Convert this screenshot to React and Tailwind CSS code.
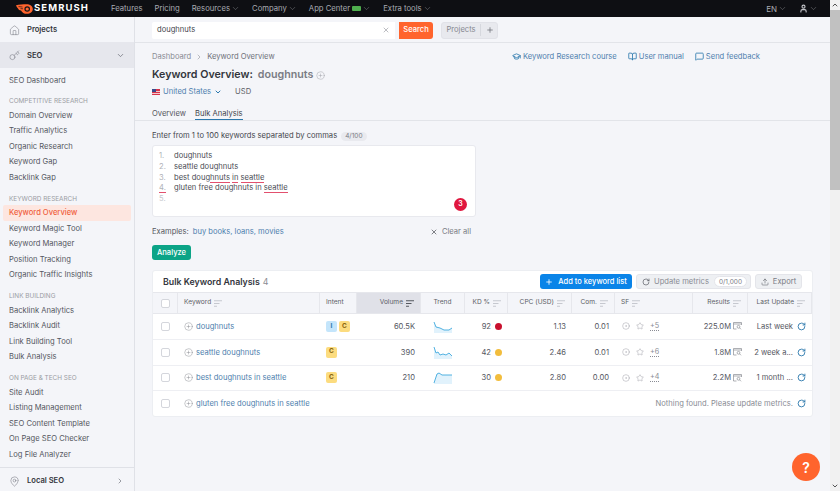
import React from 'react';
import {
  BookOpen, ChevronDown, ChevronRight, ChevronUp, CirclePlus, House, Key, MapPin, MessageSquare,
  GraduationCap, Plus, RotateCw, Star, Upload, User, X, CircleDot,
} from 'lucide-react';

const topNav = [
  { label: 'Features' },
  { label: 'Pricing' },
  { label: 'Resources', caret: true },
  { label: 'Company', caret: true },
  { label: 'App Center', badge: true, caret: true },
  { label: 'Extra tools', caret: true },
];

const sideGroups = [
  { items: ['SEO Dashboard'] },
  { title: 'COMPETITIVE RESEARCH', items: ['Domain Overview', 'Traffic Analytics', 'Organic Research', 'Keyword Gap', 'Backlink Gap'] },
  { title: 'KEYWORD RESEARCH', items: ['Keyword Overview', 'Keyword Magic Tool', 'Keyword Manager', 'Position Tracking', 'Organic Traffic Insights'] },
  { title: 'LINK BUILDING', items: ['Backlink Analytics', 'Backlink Audit', 'Link Building Tool', 'Bulk Analysis'] },
  { title: 'ON PAGE & TECH SEO', items: ['Site Audit', 'Listing Management', 'SEO Content Template', 'On Page SEO Checker', 'Log File Analyzer'] },
];

const gridCols = 'grid grid-cols-[25px_142px_37px_64px_44px_43px_64px_43px_78px_55px_64px]';

const rows = [
  { kw: 'doughnuts', intent: ['I', 'C'], volume: '60.5K', trend: 'M1 3 L3 8 L7 9 L11 11 L16 11 L19 9 L19 14 L1 14 Z', kd: '92', dot: 'bg-[#c8102e]', cpc: '1.13', com: '0.01', sf: '+5', results: '225.0M', update: 'Last week' },
  { kw: 'seattle doughnuts', intent: ['C'], volume: '390', trend: 'M1 2 L3 8 L5 7 L7 10 L10 9 L13 10 L16 8 L19 11 L19 14 L1 14 Z', kd: '42', dot: 'bg-[#f2bd3d]', cpc: '2.46', com: '0.01', sf: '+6', results: '1.8M', update: '2 week a...' },
  { kw: 'best doughnuts in seattle', intent: ['C'], volume: '210', trend: 'M1 13 L4 4 L6 3 L9 5 L13 5 L19 5 L19 14 L1 14 Z', kd: '30', dot: 'bg-[#f2bd3d]', cpc: '2.80', com: '0.00', sf: '+4', results: '2.2M', update: '1 month ...' },
];

function SortIcon({ dark }) {
  const color = dark ? '#55585f' : '#c6c8cf';
  return (
    <svg width="8" height="7" viewBox="0 0 8 7" className="shrink-0">
      <path d="M0 .75h8M0 3.5h5.5M0 6.25h3" stroke={color} strokeWidth="1" fill="none" />
    </svg>
  );
}

function SerpIcon() {
  return (
    <svg width="9" height="8" viewBox="0 0 9 8" className="shrink-0" fill="none" stroke="#8a8c94" strokeWidth="0.7">
      <path d="M3.5 7H.5V.5h8V3M.5 2h8" />
      <circle cx="5.5" cy="4.8" r="1.4" />
      <path d="M6.5 5.8L8 7.3" />
    </svg>
  );
}

function Logo() {
  return (
    <svg width="17" height="10" viewBox="0 0 17 10" className="shrink-0">
      <path d="M0 1.2 C3 .6 7 .2 10.5 .2 C14 .2 16.8 2.2 16.8 5 C16.8 7.8 14.2 9.8 11 9.8 C8 9.8 6 8.4 5 6.4 C3.6 6.4 2.4 5.6 2 4.4 C1 3.4 .4 2.4 0 1.2 Z" fill="#ff642d" />
      <path d="M2.5 2.6 L6.5 3 M4.5 4.6 L7 4.8" stroke="#15161a" strokeWidth="0.7" fill="none" />
      <circle cx="11.2" cy="5" r="2.8" fill="#15161a" />
      <circle cx="11.2" cy="5" r="1.6" fill="#ff642d" />
    </svg>
  );
}

function TopBar() {
  return (
    <div className="h-[17px] bg-[#0e0f13] flex items-center shrink-0 text-[8px] text-[#a9abb2]">
      <div className="w-[111px] pl-[16px] flex items-center gap-[1px] shrink-0">
        <Logo />
        <span className="text-[9.5px] font-bold text-white tracking-[1.1px]">SEMRUSH</span>
      </div>
      <div className="flex items-center gap-[12px]">
        {topNav.map((n) => (
          <div key={n.label} className="flex items-center gap-[1px]">
            <span className="text-[7.7px]">{n.label}</span>
            {n.badge && <span className="w-[9px] h-[5px] rounded-[1px] bg-[#4fae4e] ml-[1px]" />}
            {n.caret && <ChevronDown size={9} strokeWidth={1} />}
          </div>
        ))}
      </div>
      <div className="ml-auto flex items-center gap-[12px] pr-[12px]">
        <div className="flex items-center gap-[1px]">
          <span>EN</span>
          <ChevronDown size={9} strokeWidth={1} />
        </div>
        <div className="flex items-center gap-[1px]">
          <User size={9} strokeWidth={3} className="text-[#c4c5ca]" />
          <ChevronDown size={9} strokeWidth={1} />
        </div>
      </div>
    </div>
  );
}

function Sidebar() {
  return (
    <div className="w-[135px] shrink-0 border-r border-[#dfe1e7] bg-[#f4f5f9] flex flex-col text-[7.6px] text-[#55575f]">
      <div className="h-[25px] pt-[1px] flex items-center pl-[9px] gap-[7px] font-semibold text-[#33353c] shrink-0">
        <House size={11} strokeWidth={1.1} className="text-[#6d7079]" />
        <span>Projects</span>
      </div>
      <div className="h-[26px] pt-[1px] bg-[#e6e7ed] flex items-center pl-[9px] pr-[9px] gap-[7px] font-semibold text-[#33353c] shrink-0">
        <Key size={11} strokeWidth={1.1} className="text-[#6d7079]" />
        <span>SEO</span>
        <ChevronDown size={9} className="ml-auto text-[#6d7079]" />
      </div>
      <div className="pt-[5px] flex-1 flex flex-col">
        {sideGroups.map((g, i) => (
          <div key={i} className={i === 0 ? 'mb-[4px]' : 'mb-[5px]'}>
            {g.title && (
              <div className="h-[15px] pt-[4px] pl-[9px] flex items-center text-[6.4px] text-[#9a9ca3]">{g.title}</div>
            )}
            {g.items.map((item) => (
              item === 'Keyword Overview' ? (
                <div key={item} className="h-[15.5px] ml-[3px] mr-[3px] pl-[6px] flex items-center bg-[#fde6e0] rounded-[2px] text-[#f0613f] font-medium">
                  {item}
                </div>
              ) : (
                <div key={item} className="h-[15.5px] pl-[9px] flex items-center">{item}</div>
              )
            ))}
          </div>
        ))}
      </div>
      <div className="h-[26px] pt-[1px] border-t border-[#dfe1e7] flex items-center pl-[9px] pr-[10px] gap-[7px] font-semibold text-[#33353c] shrink-0">
        <MapPin size={11} strokeWidth={1.1} className="text-[#6d7079]" />
        <span>Local SEO</span>
        <ChevronRight size={8} className="ml-auto text-[#6d7079]" />
      </div>
    </div>
  );
}

function SearchRow() {
  return (
    <div className="h-[26px] pt-[1px] shrink-0 border-b border-[#e2e4e9] pl-[17px] flex items-center text-[7.6px]">
      <div className="w-[243px] h-[17px] bg-white rounded-l-[2px] flex items-center pl-[5px] pr-[5px] text-[#44464d]">
        <span>doughnuts</span>
        <X size={8} className="ml-auto text-[#9a9ca3]" />
      </div>
      <button className="ml-[4px] w-[34px] h-[17px] bg-[#ff642d] rounded-r-[3px] text-white font-medium">Search</button>
      <div className="ml-[8px] w-[57px] h-[17px] bg-[#e8e9ee] rounded-[3px] flex items-center text-[#868890] border border-[#e1e2e8]">
        <span className="w-[39px] text-center border-r border-[#d6d8de]">Projects</span>
        <Plus size={8} className="ml-[5px] text-[#77797f]" strokeWidth={2.5} />
      </div>
    </div>
  );
}

function PageHeader() {
  return (
    <div className="px-[17px] pt-[8px] shrink-0">
      <div className="h-[12px] flex items-center text-[7.6px] text-[#6f7179]">
        <span className="text-[#8a8c94]">Dashboard</span>
        <ChevronRight size={8} className="mx-[4px] text-[#9a9ca3]" />
        <span>Keyword Overview</span>
        <div className="ml-auto flex items-center text-[#4f7fae] mr-[53px]">
          <GraduationCap size={9} className="mr-[2px] text-[#2b78ad]" strokeWidth={2.2} />
          <span>Keyword Research course</span>
          <BookOpen size={9} className="ml-[11px] mr-[2px] text-[#2b78ad]" strokeWidth={2.2} />
          <span>User manual</span>
          <MessageSquare size={9} className="ml-[11px] mr-[2px] text-[#2b78ad]" strokeWidth={2.2} />
          <span>Send feedback</span>
        </div>
      </div>
      <div className="mt-[5px] h-[15px] flex items-center text-[10.7px] font-semibold text-[#33353c]">
        <span>Keyword Overview:</span>
        <span className="ml-[5px] text-[#7a7c84]">doughnuts</span>
        <CirclePlus size={9} strokeWidth={1.2} className="ml-[3px] text-[#9a9ca3]" />
      </div>
      <div className="mt-[2px] h-[13px] flex items-center text-[7.6px]">
        <svg width="8" height="6" viewBox="0 0 8 6" className="mr-[3px]">
          <rect width="8" height="6" fill="#d8344a" />
          <rect y="2" width="8" height="1" fill="#f3c6cc" />
          <rect y="4" width="8" height="1" fill="#f3c6cc" />
          <rect width="4" height="3" fill="#3a4a8c" />
        </svg>
        <span className="text-[#4f7fae]">United States</span>
        <ChevronDown size={8} strokeWidth={3} className="ml-[3px] text-[#2b78ad]" />
        <span className="ml-[13px] text-[#5c5e66]">USD</span>
      </div>
      <div className="mt-[10px] h-[12px] flex items-start text-[7.6px] text-[#55575f] gap-[9px]">
        <span>Overview</span>
        <span className="h-[12px] border-b border-[#2b78ad] text-[#44464d]">Bulk Analysis</span>
      </div>
    </div>
  );
}

function KeywordInput() {
  const under = 'border-b border-[#e2506e]';
  return (
    <div className="pl-[17px] w-[341px] shrink-0">
      <div className="mt-[10px] h-[10px] flex items-center text-[7.6px] text-[#44464d]">
        <span>Enter from 1 to 100 keywords separated by commas</span>
        <span className="ml-[4px] px-[4px] h-[9px] leading-[9px] rounded-full bg-[#e9eaef] text-[6.5px] text-[#7a7c84]">4/100</span>
      </div>
      <div className="relative mt-[4px] h-[72px] bg-white rounded-[3px] border border-[#e8e9ee] pl-[6px] pt-[5px] text-[7.6px] leading-[10.8px] text-[#4b4d55]">
        <div className="flex"><span className="w-[15px] text-[#b0b2b8]">1.</span><span>doughnuts</span></div>
        <div className="flex"><span className="w-[15px] text-[#b0b2b8]">2.</span><span>seattle doughnuts</span></div>
        <div className="flex"><span className="w-[15px] text-[#b0b2b8]">3.</span><span>best doug<span className={under}>hnuts</span> <span className={under}>in</span> <span className={under}>seattle</span></span></div>
        <div className="flex"><span className="w-[15px] text-[#b0b2b8]"><span className={under}>4.</span></span><span>gluten free doughnuts in <span className={under}>seattle</span></span></div>
        <div className="flex"><span className="w-[15px] text-[#c6c8cd]">5.</span></div>
        <span className="absolute right-[8px] bottom-[5px] w-[13px] h-[13px] rounded-full bg-[#e0173f] text-white text-[7px] font-semibold flex items-center justify-center">3</span>
      </div>
      <div className="mt-[9px] h-[12px] flex items-center text-[7.6px] text-[#55575f]">
        <span>Examples:</span>
        <span className="ml-[4px] text-[#4f7fae]">buy books, loans, movies</span>
        <X size={8} strokeWidth={2.5} className="ml-auto text-[#66686f]" />
        <span className="ml-[4px] mr-[5px] text-[#7a7c84]">Clear all</span>
      </div>
      <button className="block mt-[7px] w-[39px] h-[15px] bg-[#0ca487] rounded-[3px] text-white text-[7.6px] font-medium">Analyze</button>
    </div>
  );
}

function Th({ children, right, dark, center }) {
  return (
    <div className={`h-full flex items-center gap-[3px] px-[6px] border-r border-[#e6e7ec] text-[6.6px] text-[#5c5e66] ${right ? 'justify-end' : ''} ${center ? 'justify-center' : ''} ${dark ? 'bg-[#e0e1e8]' : ''}`}>
      {children}
    </div>
  );
}

function Checkbox() {
  return <span className="w-[9px] h-[9px] rounded-[2px] border border-[#d4d6dc] bg-white block" />;
}

function Keyword({ text }) {
  return (
    <div className="flex items-center gap-[3px] pl-[6px] text-[#4f7fae]">
      <CirclePlus size={9} strokeWidth={1.1} className="text-[#7a7c84] shrink-0" />
      <span>{text}</span>
    </div>
  );
}

function Intent({ v }) {
  const cls = v === 'I' ? 'bg-[#c4e5fb] text-[#2b78ad]' : 'bg-[#fcdc7f] text-[#8a6510]';
  return <span className={`w-[11px] h-[11px] rounded-[2px] text-[6.5px] font-bold flex items-center justify-center ${cls}`}>{v}</span>;
}

function Trend({ d }) {
  return (
    <svg width="20" height="15" viewBox="0 0 20 15">
      <path d={d} fill="#e1f2fc" />
      <path d={d.replace(/ L19 14 L1 14 Z/, '')} fill="none" stroke="#3fa9de" strokeWidth="0.9" />
    </svg>
  );
}

function BulkTable() {
  return (
    <div className="ml-[17px] mt-[10px] w-[661px] bg-white rounded-[3px] border border-[#eceef2] shrink-0">
      <div className="h-[21px] flex items-center pl-[10px] pr-[10px]">
        <span className="text-[8.8px] font-semibold text-[#33353c]">Bulk Keyword Analysis</span>
        <span className="ml-[3px] text-[8.8px] text-[#8a8c94]">4</span>
        <button className="ml-auto h-[15px] w-[92px] rounded-[3px] bg-[#0a84e8] text-white text-[7.5px] font-medium flex items-center justify-center gap-[5px]">
          <Plus size={8} strokeWidth={2.5} />
          <span>Add to keyword list</span>
        </button>
        <div className="ml-[4px] h-[15px] w-[115px] rounded-[3px] bg-[#eef0f3] border border-[#e4e5ea] flex items-center pl-[5px] text-[7.6px] text-[#8a8c94]">
          <RotateCw size={8} strokeWidth={2} className="text-[#55575f]" />
          <span className="ml-[4px]">Update metrics</span>
          <span className="ml-[5px] px-[4px] h-[11px] leading-[10px] rounded-full bg-white border border-[#e4e5ea] text-[6.5px] text-[#7a7c84]">0/1,000</span>
        </div>
        <div className="ml-[4px] h-[15px] w-[47px] rounded-[3px] bg-[#eef0f3] border border-[#e4e5ea] flex items-center justify-center gap-[4px] text-[7.6px] text-[#7a7c84]">
          <Upload size={8} strokeWidth={1.6} className="text-[#55575f]" />
          <span>Export</span>
        </div>
      </div>
      <div className={`${gridCols} h-[22px] bg-[#f4f5f9] border-y border-[#e6e7ec] items-center`}>
        <div className="h-full flex items-center justify-center border-r border-[#e6e7ec]"><Checkbox /></div>
        <Th>Keyword <SortIcon /></Th>
        <Th>Intent</Th>
        <Th right dark>Volume <SortIcon dark /></Th>
        <Th center>Trend</Th>
        <Th right>KD % <SortIcon /></Th>
        <Th right>CPC (USD) <SortIcon /></Th>
        <Th right>Com. <SortIcon /></Th>
        <Th>SF <SortIcon /></Th>
        <Th right>Results <SortIcon /></Th>
        <Th right>Last Update <SortIcon /></Th>
      </div>
      {rows.map((r) => (
        <div key={r.kw} className={`${gridCols} h-[25.8px] border-b border-[#eeeff3] items-center text-[7.6px] text-[#55575f]`}>
          <div className="flex justify-center"><Checkbox /></div>
          <Keyword text={r.kw} />
          <div className="flex gap-[2px] pl-[6px]">{r.intent.map((v) => <Intent key={v} v={v} />)}</div>
          <div className="text-right pr-[6px]">{r.volume}</div>
          <div className="flex justify-center"><Trend d={r.trend} /></div>
          <div className="flex items-center justify-end gap-[4px] pr-[6px]">
            <span>{r.kd}</span>
            <span className={`w-[7px] h-[7px] rounded-full ${r.dot}`} />
          </div>
          <div className="text-right pr-[6px]">{r.cpc}</div>
          <div className="text-right pr-[6px]">{r.com}</div>
          <div className="flex items-center gap-[6px] pl-[7px] text-[#8a8c94]">
            <CircleDot size={8} strokeWidth={1.2} />
            <Star size={8} strokeWidth={1.2} />
            <span className="text-[7.2px] border-b border-dotted border-[#8a8c94] leading-[8px]">{r.sf}</span>
          </div>
          <div className="flex items-center justify-end gap-[2px] pr-[6px]">
            <span>{r.results}</span>
            <SerpIcon />
          </div>
          <div className="flex items-center justify-end gap-[4px] pr-[6px] whitespace-nowrap">
            <span>{r.update}</span>
            <RotateCw size={9} strokeWidth={2.4} className="text-[#2b78ad] shrink-0" />
          </div>
        </div>
      ))}
      <div className={`${gridCols} h-[25px] items-center text-[7.6px]`}>
        <div className="flex justify-center"><Checkbox /></div>
        <Keyword text="gluten free doughnuts in seattle" />
        <div className="col-span-9 flex items-center justify-end gap-[4px] pr-[6px] text-[#8a8c94]">
          <span>Nothing found. Please update metrics.</span>
          <RotateCw size={9} strokeWidth={2.4} className="text-[#2b78ad]" />
        </div>
      </div>
    </div>
  );
}

function Scrollbar() {
  return (
    <div className="w-[10px] shrink-0 bg-[#f1f1f1] flex flex-col items-center">
      <ChevronUp size={8} strokeWidth={3} className="text-[#555] mt-[1px]" />
      <div className="w-[10px] h-[180px] mt-[1px] bg-[#c1c1c1]" />
      <ChevronDown size={8} strokeWidth={3} className="text-[#555] mt-auto mb-[1px]" />
    </div>
  );
}

export default function App() {
  return (
    <div className="relative h-[491px] w-[840px] overflow-hidden flex bg-[#f4f5f9] font-['Inter',sans-serif]">
      <div className="flex-1 min-w-0 flex flex-col">
        <TopBar />
        <div className="flex-1 min-h-0 flex">
          <Sidebar />
          <div className="flex-1 min-w-0 flex flex-col">
            <SearchRow />
            <PageHeader />
            <div className="border-t border-[#e2e4e9] shrink-0" />
            <KeywordInput />
            <BulkTable />
          </div>
        </div>
      </div>
      <Scrollbar />
      <button className="absolute left-[792px] top-[453px] w-[28px] h-[28px] rounded-full bg-[#ff642d] text-white text-[14px] font-semibold flex items-center justify-center">?</button>
    </div>
  );
}
